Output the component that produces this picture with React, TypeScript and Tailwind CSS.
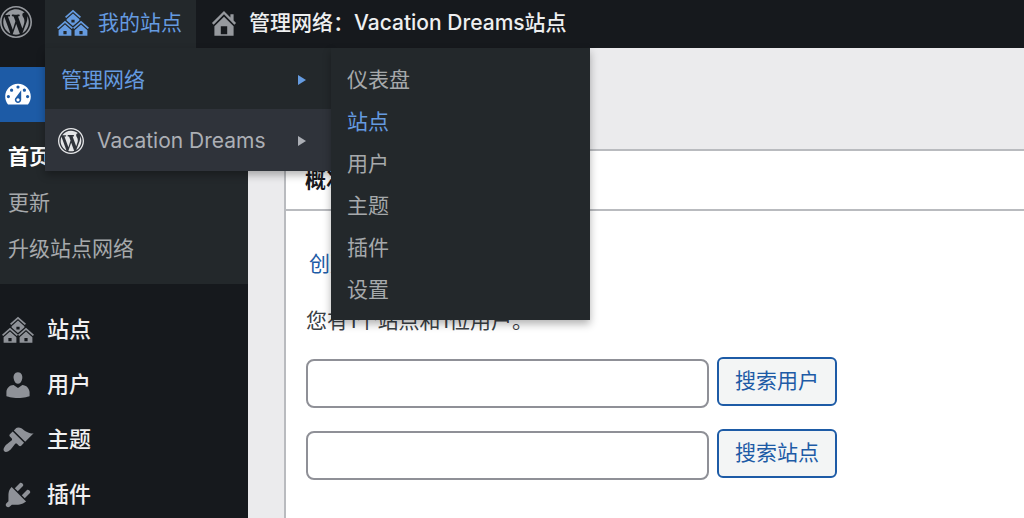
const ICONS = {
  wordpress:
    "M20 10c0-5.52-4.48-10-10-10S0 4.48 0 10s4.48 10 10 10 10-4.48 10-10zM10 1.01c4.97 0 8.99 4.02 8.99 8.99s-4.02 8.99-8.99 8.99S1.01 14.97 1.01 10 5.03 1.01 10 1.01zM8.01 14.82L4.96 6.61c.49-.03 1.05-.08 1.05-.08.43-.05.38-1.01-.06-.99 0 0-1.29.1-2.13.1-.15 0-.33 0-.52-.01 1.44-2.17 3.9-3.6 6.7-3.6 2.09 0 3.99.79 5.41 2.09-.6-.08-1.45.35-1.45 1.42 0 .66.38 1.22.79 1.88.31.54.5 1.22.5 2.21 0 1.34-1.27 4.48-1.27 4.48l-2.71-7.5c.48-.03.75-.16.75-.16.43-.05.38-1.1-.05-1.08 0 0-1.3.11-2.14.11-.78 0-2.11-.11-2.11-.11-.43-.02-.48 1.06-.05 1.08l.84.08 1.12 3.04zm6.02 2.15L16.64 10s.67-1.69.39-3.81c.63 1.14.94 2.42.94 3.81 0 2.96-1.56 5.58-3.94 6.97zM2.68 6.77L6.5 17.25c-2.67-1.3-4.47-4.08-4.47-7.25 0-1.16.2-2.23.65-3.23zm7.45 4.53l2.29 6.25c-.75.27-1.57.42-2.42.42-.72 0-1.41-.11-2.06-.3z",
  multisite:
    "M14.27 6.87L10 3.14 5.73 6.87 5 6.14l5-4.38 5 4.38zM14 8.42l-4.05 3.43L6 8.38v-.74l4-3.5 4 3.5v.78zM11 9.7V8H9v1.7h2zm-1.73 4.03L5 10 .73 13.73 0 13l5-4.38L10 13zm10 0L15 10l-4.27 3.73L10 13l5-4.38L20 13zM5 11l4 3.5V18H1v-3.5zm10 0l4 3.5V18h-8v-3.5zm-9 6v-2H4v2h2zm10 0v-2h-2v2h2z",
  home: "M16 8.5l1.53 1.53-1.06 1.06L10 4.6l-6.47 6.49-1.06-1.06L10 2.5l4 4v-2h2v4zm-6-2.46l6 5.99V18H4v-5.97zM12 17v-5H8v5h4z",
  dashboard:
    "M3.76 16h12.48c1.1-1.37 1.76-3.11 1.76-5 0-4.42-3.58-8-8-8s-8 3.58-8 8c0 1.89.66 3.63 1.76 5zM10 4c.55 0 1 .45 1 1s-.45 1-1 1-1-.45-1-1 .45-1 1-1zM6 6c.55 0 1 .45 1 1s-.45 1-1 1-1-.45-1-1 .45-1 1-1zm8 0c.55 0 1 .45 1 1s-.45 1-1 1-1-.45-1-1 .45-1 1-1zm-5.37 5.55L12 7v6c0 1.1-.9 2-2 2s-2-.9-2-2c0-.57.24-1.08.63-1.45zM4 10c.55 0 1 .45 1 1s-.45 1-1 1-1-.45-1-1 .45-1 1-1zm12 0c.55 0 1 .45 1 1s-.45 1-1 1-1-.45-1-1 .45-1 1-1zm-6 4c.55 0 1-.45 1-1s-.45-1-1-1-1 .45-1 1 .45 1 1 1z",
  users:
    "M10 9.25c-2.27 0-2.73-3.44-2.73-3.44C7 4.02 7.82 2 9.97 2c2.16 0 2.98 2.02 2.71 3.81 0 0-.41 3.44-2.68 3.44zm0 2.57L12.72 10c2.39 0 4.52 2.33 4.52 4.53v2.49s-3.65 1.13-7.24 1.13c-3.65 0-7.24-1.13-7.24-1.13v-2.49c0-2.25 1.94-4.48 4.47-4.48z",
  appearance:
    "M14.48 11.06L7.41 3.99l1.5-1.5c.5-.56 2.3-.47 3.51.32 1.21.8 1.43 1.28 2.91 2.1 1.18.64 2.45 1.26 4.45.85zm-.71.71L6.7 4.7 4.93 6.47c-.39.39-.39 1.02 0 1.41l1.06 1.06c.39.39.39 1.03 0 1.42-.6.6-1.43 1.11-2.21 1.69-.35.26-.7.53-1.01.84C1.43 14.23.4 16.08 1.4 17.07c.99 1 2.84-.03 4.18-1.36.31-.31.58-.66.85-1.02.57-.78 1.08-1.61 1.69-2.21.39-.39 1.02-.39 1.41 0l1.06 1.06c.39.39 1.02.39 1.41 0z",
  plugins:
    "M13.11 4.36L9.87 7.6 8 5.73l3.24-3.24c.35-.34 1.05-.2 1.56.32.52.51.66 1.21.31 1.55zm-8 1.77l.91-1.12 9.01 9.01-1.19.84c-.71.71-2.63 1.16-3.82 1.16H6.14L4.9 17.26c-.59.59-1.54.59-2.12 0-.59-.58-.59-1.53 0-2.12l1.24-1.24v-3.88c0-1.13.4-3.19 1.09-3.89zm7.26 3.97l3.24-3.24c.34-.35 1.04-.21 1.55.31.52.51.66 1.21.31 1.55l-3.24 3.25z",
};

type IconName = keyof typeof ICONS;

function Icon({ name, className = "size-8" }: { name: IconName; className?: string }) {
  return (
    <svg viewBox="0 0 20 20" fill="currentColor" fillRule="evenodd" aria-hidden="true" className={`shrink-0 ${className}`}>
      <path d={ICONS[name]} />
    </svg>
  );
}

function Arrow() {
  return (
    <svg viewBox="0 0 8 10" fill="currentColor" aria-hidden="true" className="ml-auto h-[10px] w-2 shrink-0">
      <path d="M0 0l8 5-8 5z" />
    </svg>
  );
}

const networkLinks = ["仪表盘", "站点", "用户", "主题", "插件", "设置"];
const dashboardLinks = ["首页", "更新", "升级站点网络"];
const menu: { icon: IconName; label: string }[] = [
  { icon: "multisite", label: "站点" },
  { icon: "users", label: "用户" },
  { icon: "appearance", label: "主题" },
  { icon: "plugins", label: "插件" },
];

function AdminBar() {
  return (
    <header className="relative z-20 flex h-12 bg-[#16191d] text-[21px] leading-[42px] text-[#eeeff0]">
      <a href="#about" aria-label="WordPress" className="flex w-[45px] items-center pb-1 text-[#96999e]">
        <Icon name="wordpress" />
      </a>
      <nav className="relative">
        <a href="#my-sites" className="flex h-12 items-center gap-[9px] bg-[#23282b] pr-[14px] pb-[2px] pl-3 text-[#659be0]">
          <Icon name="multisite" />
          <span>我的站点</span>
        </a>
        <ul className="absolute top-full left-0 w-[286px] bg-[#23282b] shadow-[0_4px_8px_rgba(0,0,0,0.3)]">
          <li>
            <a href="#network" className="flex h-[61px] items-center pt-[2px] pr-[25px] pl-4 text-[#659be0]">
              管理网络
              <Arrow />
            </a>
            <ul className="absolute top-0 left-full w-[259px] bg-[#23282b] pt-[11px] pb-[9px] shadow-[0_4px_8px_rgba(0,0,0,0.3)]">
              {networkLinks.map((label) => (
                <li key={label}>
                  <a
                    href={`#${label}`}
                    className={`block px-4 ${label === "站点" ? "text-[#659be0]" : "text-[#a6a9ab]"}`}
                  >
                    {label}
                  </a>
                </li>
              ))}
            </ul>
          </li>
          <li>
            <a href="#site" className="flex h-[62px] items-center gap-[13px] bg-[#2f333a] pt-[2px] pr-[25px] pl-[13px] text-[#acafb5]">
              <Icon name="wordpress" className="size-[26px] text-[#e4e5e7]" />
              Vacation Dreams
              <Arrow />
            </a>
          </li>
        </ul>
      </nav>
      <a href="#network-home" className="flex items-center gap-[9px] px-3 pb-[2px] font-medium">
        <Icon name="home" className="size-8 text-[#96999e]" />
        <span>管理网络：Vacation Dreams站点</span>
      </a>
    </header>
  );
}

function Sidebar() {
  return (
    <aside className="w-[248px] shrink-0 bg-[#16191d] pt-[19px] text-[22px] font-medium text-[#f0f0f1]">
      <a href="#dashboard" aria-label="仪表盘" className="flex h-[55px] items-center bg-[#1d5ba6] pl-[2px] text-white">
        <Icon name="dashboard" />
      </a>
      <ul className="mb-[18px] bg-[#23282b] py-3 text-[21px] leading-[46px]">
        {dashboardLinks.map((label, i) => (
          <li key={label}>
            <a href={`#${label}`} className={`block px-2 ${i === 0 ? "font-bold text-white" : "font-normal text-[#a6a9ab]"}`}>
              {label}
            </a>
          </li>
        ))}
      </ul>
      <ul>
        {menu.map(({ icon, label }) => (
          <li key={label}>
            <a href={`#${label}`} className="flex h-[55px] items-center gap-[13px] pl-[2px]">
              <Icon name={icon} className="size-8 text-[#8f9298]" />
              {label}
            </a>
          </li>
        ))}
      </ul>
    </aside>
  );
}

function SearchRow({ label }: { label: string }) {
  return (
    <form className="mb-6 flex h-12 items-center gap-2" onSubmit={(e) => e.preventDefault()}>
      <input
        type="search"
        aria-label={label}
        className="mt-1 h-[49px] w-[403px] rounded-lg border-2 border-[#8f9097] bg-white px-3 outline-none"
      />
      <button type="submit" className="h-[49px] rounded-md border-2 border-[#1d5ba6] bg-[#f3f5f5] px-4 text-[#1d5ba6]">
        {label}
      </button>
    </form>
  );
}

export default function App() {
  return (
    <div className="flex h-screen flex-col overflow-hidden bg-[#ebebed] font-['Inter','Noto_Sans_CJK_SC',sans-serif] text-[21px]">
      <AdminBar />
      <div className="flex min-h-0 flex-1">
        <Sidebar />
        <main className="flex min-w-0 flex-1 flex-col pt-[101px] pl-9">
          <section className="flex-1 border-t-2 border-l-2 border-[#b9bbbf] bg-white text-[#3a4045]">
            <h2 className="border-b-2 border-[#b9bbbf] px-[19px] leading-[58px] font-bold text-[#17191d]">概况</h2>
            <div className="px-5 pt-8">
              <p className="px-[3px] leading-[42px] text-[#1d5ba6]">
                <a href="#new-site">创建新站点</a>
              </p>
              <p className="my-[15px] leading-[42px]">您有1个站点和1位用户。</p>
              <SearchRow label="搜索用户" />
              <SearchRow label="搜索站点" />
            </div>
          </section>
        </main>
      </div>
    </div>
  );
}
